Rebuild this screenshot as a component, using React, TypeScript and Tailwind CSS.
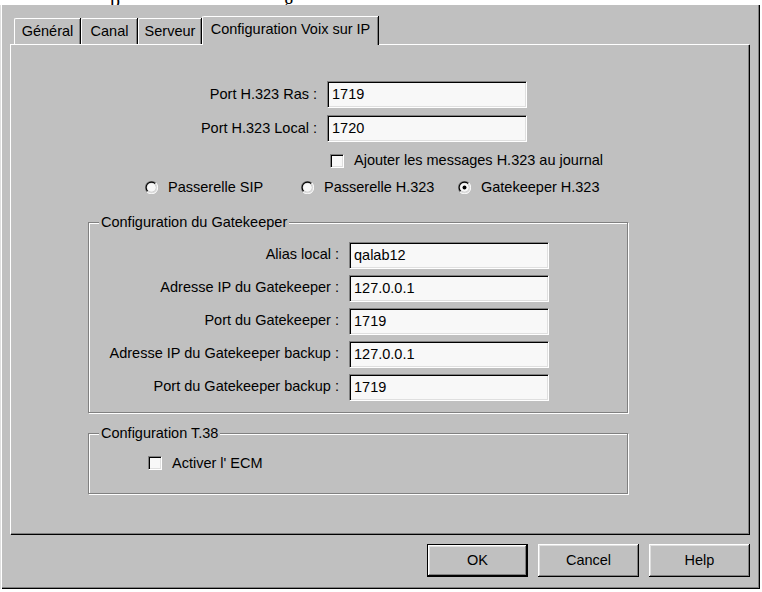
import React from "react";

const sunken =
  "border border-t-[#808080] border-l-[#808080] border-r-white border-b-white shadow-[inset_1px_1px_0_#000,inset_-1px_-1px_0_#dfdfdf]";
const raised =
  "shadow-[inset_-1px_-1px_0_#000,inset_1px_1px_0_#fff,inset_-2px_-2px_0_#808080,inset_2px_2px_0_#dfdfdf]";

function TextBox({ value, w = "w-[200px]" }: { value: string; w?: string }) {
  return (
    <div className={`${w} h-[27px] bg-[#f8f8f8] ${sunken} flex items-center pl-[4px] leading-none`}>
      {value}
    </div>
  );
}

function CheckBox({ label }: { label: string }) {
  return (
    <div className="flex items-center gap-[10px]">
      <div className={`w-[14px] h-[14px] bg-[#f8f8f8] ${sunken}`} />
      <span>{label}</span>
    </div>
  );
}

function Radio({ label, checked, w }: { label: string; checked?: boolean; w?: string }) {
  return (
    <div className={`flex items-center gap-[10px] ${w ?? ""}`}>
      <svg width="13" height="13" viewBox="0 0 12 12">
        <path d="M10 2 A5.5 5.5 0 0 0 2 10" fill="none" stroke="#808080" strokeWidth="1" />
        <path d="M9.5 2.5 A4.5 4.5 0 0 0 2.5 9.5" fill="none" stroke="#000" strokeWidth="1" />
        <path d="M2 10 A5.5 5.5 0 0 0 10 2" fill="none" stroke="#fff" strokeWidth="1" />
        <path d="M2.5 9.5 A4.5 4.5 0 0 0 9.5 2.5" fill="none" stroke="#dfdfdf" strokeWidth="1" />
        <circle cx="6" cy="6" r="4" fill="#f8f8f8" />
        {checked && <circle cx="6" cy="6" r="1.8" fill="#000" />}
      </svg>
      <span>{label}</span>
    </div>
  );
}

function Row({ label, value, lw }: { label: string; value: string; lw: string }) {
  return (
    <div className="flex items-center">
      <div className={`${lw} text-right`}>{label}</div>
      <div className="ml-[10px]">
        <TextBox value={value} />
      </div>
    </div>
  );
}

function GroupBox({ title, children, h }: { title: string; children: React.ReactNode; h: string }) {
  return (
    <div className={`relative ${h} border border-[#808080] shadow-[1px_1px_0_#fff,inset_1px_1px_0_#fff]`}>
      <span className="absolute -top-[10px] left-[10px] bg-[#c0c0c0] px-[2px] leading-[18px]">{title}</span>
      {children}
    </div>
  );
}

const tabs = [
  { t: "Général", w: "w-[66px]" },
  { t: "Canal", w: "w-[56px]" },
  { t: "Serveur", w: "w-[63px]" },
];

export default function App() {
  return (
    <div className="w-[762px] h-[592px] bg-white font-['Liberation_Sans',Arial,sans-serif] text-[14.5px] text-black overflow-hidden">
      <div className="h-[5px] overflow-hidden relative font-['Liberation_Serif',serif] text-[20px]">
        <span className="absolute left-[110px] -top-[15px]">p</span>
        <span className="absolute left-[284px] -top-[15px]">g</span>
      </div>
      <div className="w-[760px] h-[584px] bg-[#c0c0c0] border-l border-l-[#dfdfdf] shadow-[inset_1px_0_0_#fff,inset_-1px_-1px_0_#000,inset_-2px_-2px_0_#808080] pt-[10px] pl-[9px]">
        {/* tabs */}
        <div className="flex items-end h-[29px] pl-[4px]">
          {tabs.map((tab, i) => (
            <div
              key={tab.t}
              className={`${tab.w} h-[26px] flex items-center justify-center border-t border-l border-t-white border-l-white rounded-tl-[2px] shadow-[inset_-1px_0_0_#808080,1px_0_0_#000] ${i === 0 ? "" : "ml-[1px]"}`}
            >
              {tab.t}
            </div>
          ))}
          <div className="w-[176px] h-[29px] ml-[1px] -mb-[1px] z-10 bg-[#c0c0c0] flex items-center justify-center border-t border-l border-t-white border-l-white rounded-tl-[2px] shadow-[inset_-1px_0_0_#808080,1px_0_0_#000] pb-[2px]">
            Configuration Voix sur IP
          </div>
        </div>
        {/* panel */}
        <div className="w-[739px] h-[490px] border-t border-l border-t-white border-l-white shadow-[inset_-1px_-1px_0_#808080,1px_1px_0_#000] pt-[36px]">
          <div className="flex flex-col gap-[7px]">
            <Row label="Port H.323 Ras :" value="1719" lw="w-[306px]" />
            <Row label="Port H.323 Local :" value="1720" lw="w-[306px]" />
          </div>
          <div className="pl-[319px] mt-[8px]">
            <CheckBox label="Ajouter les messages H.323 au journal" />
          </div>
          <div className="flex items-center mt-[5px] pl-[134px]">
            <Radio label="Passerelle SIP" w="w-[156px]" />
            <Radio label="Passerelle H.323" w="w-[157px]" />
            <Radio label="Gatekeeper H.323" checked />
          </div>
          <div className="ml-[77px] w-[540px] mt-[23px]">
            <GroupBox title="Configuration du Gatekeeper" h="h-[191px]">
              <div className="flex flex-col gap-[6px] pt-[19px]">
                <Row label="Alias local :" value="qalab12" lw="w-[250px]" />
                <Row label="Adresse IP du Gatekeeper :" value="127.0.0.1" lw="w-[250px]" />
                <Row label="Port du Gatekeeper :" value="1719" lw="w-[250px]" />
                <Row label="Adresse IP du Gatekeeper backup :" value="127.0.0.1" lw="w-[250px]" />
                <Row label="Port du Gatekeeper backup :" value="1719" lw="w-[250px]" />
              </div>
            </GroupBox>
            <div className="mt-[20px]">
              <GroupBox title="Configuration T.38" h="h-[61px]">
                <div className="pl-[59px] pt-[19px]">
                  <CheckBox label="Activer l' ECM" />
                </div>
              </GroupBox>
            </div>
          </div>
        </div>
        {/* buttons */}
        <div className="flex justify-end gap-[10px] mt-[10px] pr-[10px]">
          <button className={`w-[101px] h-[33px] border border-black ${raised} bg-[#c0c0c0]`}>OK</button>
          <button className={`w-[101px] h-[33px] ${raised} bg-[#c0c0c0]`}>Cancel</button>
          <button className={`w-[101px] h-[33px] ${raised} bg-[#c0c0c0]`}>Help</button>
        </div>
      </div>
    </div>
  );
}
